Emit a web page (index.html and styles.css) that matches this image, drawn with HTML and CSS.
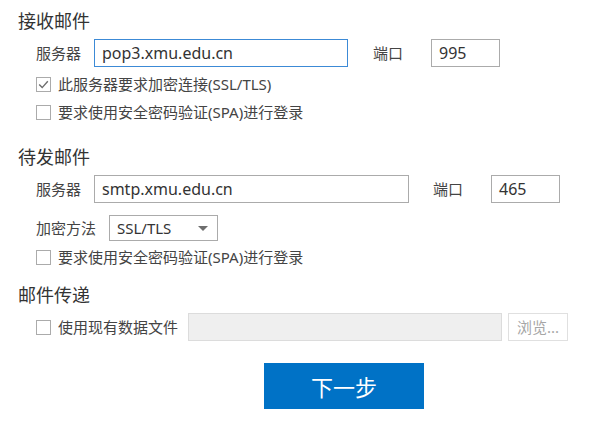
FILE: index.html
```html
<!DOCTYPE html>
<html lang="zh-CN">
<head>
<meta charset="utf-8">
<title>账户设置</title>
<link rel="stylesheet" href="styles.css">
</head>
<body>
<div class="page">
  <section class="section first">
    <h2 class="title">接收邮件</h2>
    <div class="fields">
      <div class="row">
        <span class="label">服务器</span>
        <div class="input focused wide-in">pop3.xmu.edu.cn</div>
        <span class="label port-label">端口</span>
        <div class="input port">995</div>
      </div>
      <label class="check first-check">
        <span class="box checked"><svg viewBox="0 0 15 15" width="15" height="15"><path d="M3.2 7.6 L6.2 10.6 L11.8 4.2" fill="none" stroke="#6d6d6d" stroke-width="1.4"/></svg></span>
        <span class="check-text">此服务器要求加密连接(SSL/TLS)</span>
      </label>
      <label class="check">
        <span class="box"></span>
        <span class="check-text">要求使用安全密码验证(SPA)进行登录</span>
      </label>
    </div>
  </section>

  <section class="section second">
    <h2 class="title">待发邮件</h2>
    <div class="fields">
      <div class="row">
        <span class="label">服务器</span>
        <div class="input wider-in">smtp.xmu.edu.cn</div>
        <span class="label port-label">端口</span>
        <div class="input port">465</div>
      </div>
      <div class="row select-row">
        <span class="label sel-label">加密方法</span>
        <div class="select"><span>SSL/TLS</span><span class="arrow"></span></div>
      </div>
      <label class="check after-select">
        <span class="box"></span>
        <span class="check-text">要求使用安全密码验证(SPA)进行登录</span>
      </label>
    </div>
  </section>

  <section class="section third">
    <h2 class="title">邮件传递</h2>
    <div class="fields">
      <div class="row file-row">
        <label class="check inline">
          <span class="box"></span>
          <span class="check-text">使用现有数据文件</span>
        </label>
        <div class="input file"></div>
        <div class="browse">浏览...</div>
      </div>
    </div>
  </section>

  <div class="actions">
    <button class="next">下一步</button>
  </div>
</div>
</body>
</html>
```

FILE: styles.css
```css
html, body {
  margin: 0;
  padding: 0;
  background: #ffffff;
}

body {
  font-family: "Noto Sans", "Noto Sans CJK SC", sans-serif;
  color: #444444;
  font-size: 15px;
}

.page {
  padding: 9px 0 0 18px;
  width: 582px;
}

.title {
  margin: 0;
  font-size: 18px;
  font-weight: normal;
  line-height: 24px;
  color: #333333;
}

.second {
  margin-top: 19px;
}

.third {
  margin-top: 12px;
}

.fields {
  padding-left: 18px;
}

.row {
  display: flex;
  align-items: center;
  height: 28px;
  margin-top: 6px;
}

.label {
  width: 58px;
  flex: none;
  line-height: 20px;
  white-space: nowrap;
}

.port-label {
  margin-left: 25px;
}

.input {
  box-sizing: border-box;
  height: 28px;
  border: 1px solid #ababab;
  padding: 0 7px;
  font-size: 16px;
  line-height: 26px;
  color: #333333;
  flex: none;
}

.focused {
  border-color: #3c8ad6;
}

.wide-in {
  width: 254px;
}

.wider-in {
  width: 315px;
}

.second .port-label {
  margin-left: 24px;
}

.port {
  width: 69px;
}

.select-row {
  margin-top: 12px;
  height: 26px;
}

.sel-label {
  width: 73px;
}

.select {
  box-sizing: border-box;
  width: 109px;
  height: 26px;
  border: 1px solid #ababab;
  display: flex;
  align-items: center;
  justify-content: space-between;
  padding: 0 8px 0 7px;
  color: #333333;
  font-size: 15px;
}

.arrow {
  width: 0;
  height: 0;
  border-left: 5px solid transparent;
  border-right: 5px solid transparent;
  border-top: 5px solid #6e6e6e;
  margin-right: 1px;
}

.check {
  display: flex;
  align-items: center;
  height: 28px;
}

.first-check {
  margin-top: 3px;
}

.after-select {
  margin-top: 2px;
}

.box {
  box-sizing: border-box;
  width: 15px;
  height: 15px;
  border: 1px solid #ababab;
  background: #ffffff;
  flex: none;
  display: flex;
}

.box svg {
  margin: -1px;
}

.check-text {
  margin-left: 7px;
  white-space: nowrap;
  line-height: 20px;
}

.file-row {
  margin-top: 6px;
}

.inline {
  height: 28px;
}

.file {
  width: 314px;
  margin-left: 10px;
  background: #efefef;
  border-color: #dcdcdc;
}

.browse {
  box-sizing: border-box;
  width: 60px;
  height: 28px;
  margin-left: 6px;
  border: 1px solid #e0e0e0;
  color: #a6a6a6;
  font-size: 15px;
  line-height: 26px;
  text-align: center;
}

.actions {
  margin-top: 22px;
  padding-left: 246px;
}

.next {
  width: 160px;
  height: 46px;
  border: none;
  background: #0072c6;
  color: #ffffff;
  font-family: "Noto Sans CJK SC", sans-serif;
  font-size: 22px;
  padding: 0;
  cursor: pointer;
}
```
